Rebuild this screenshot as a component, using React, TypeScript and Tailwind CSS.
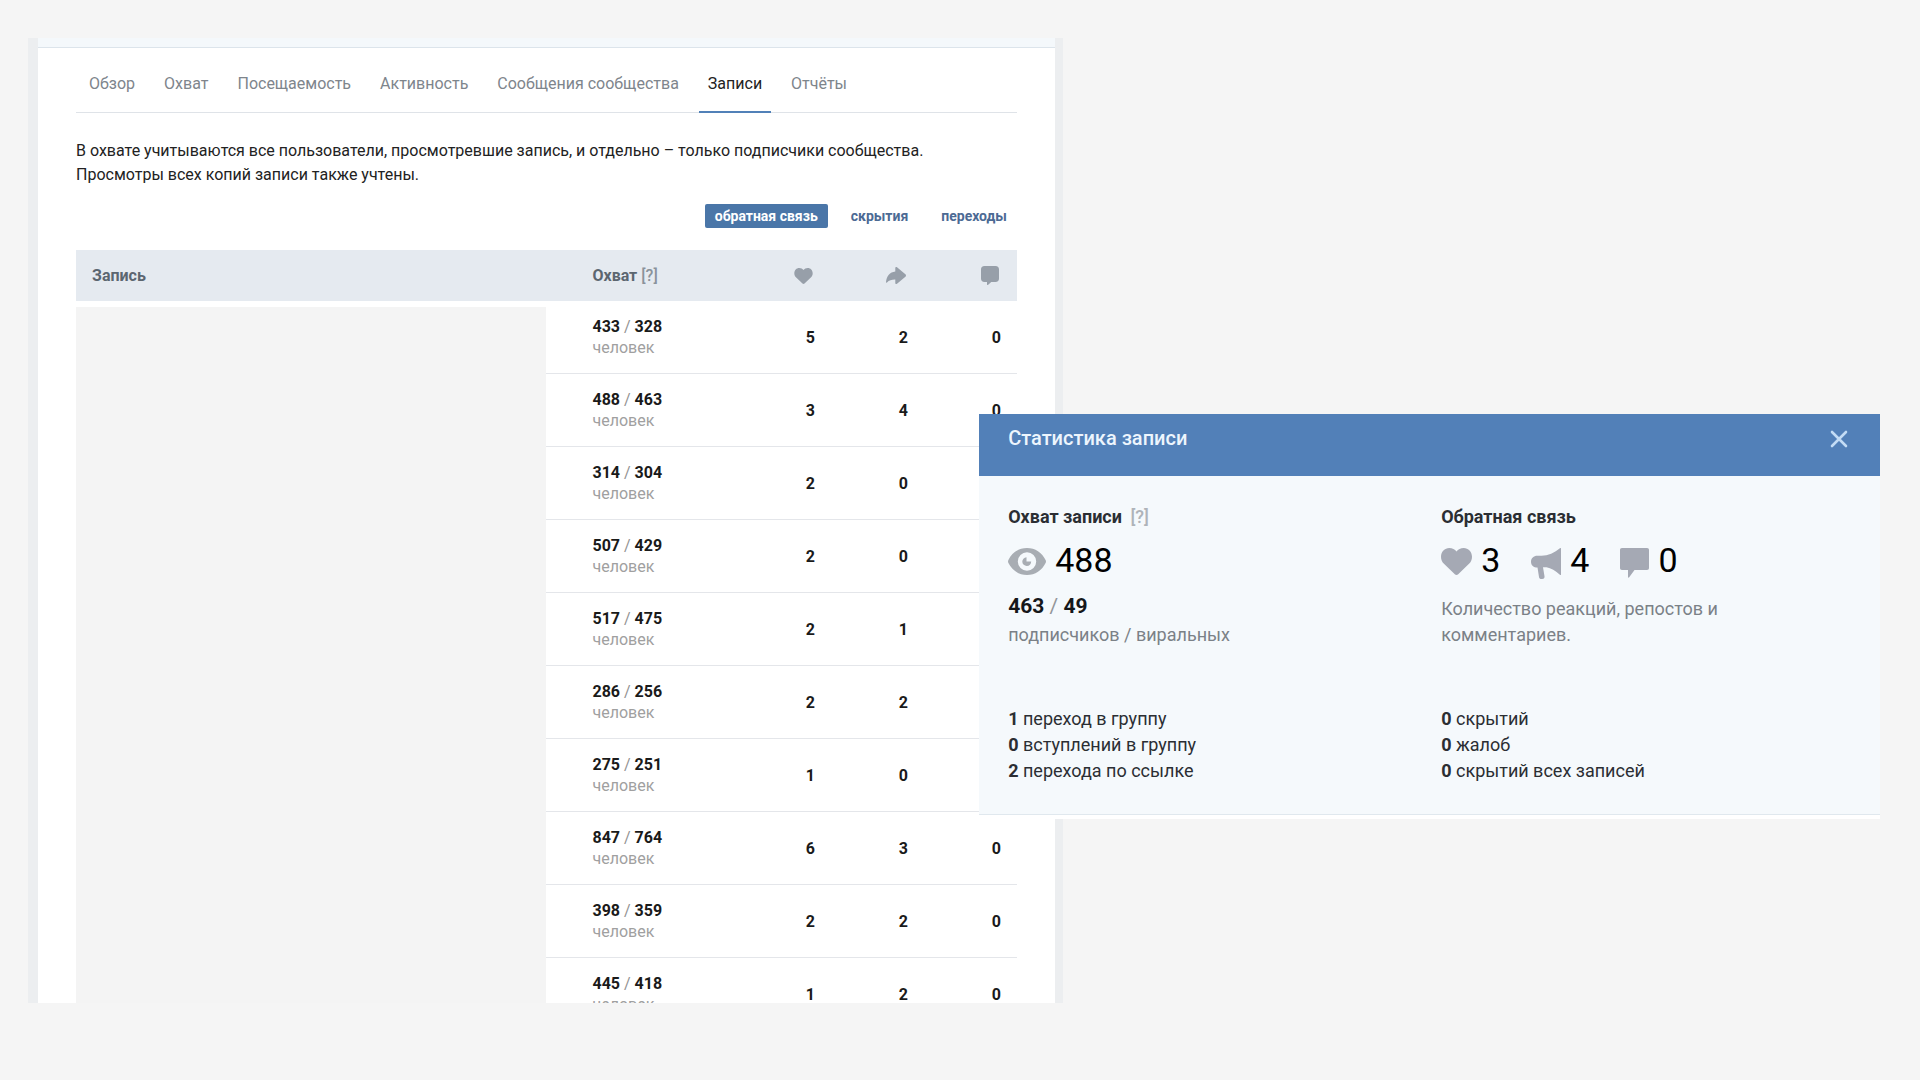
import { useState } from "react";

const tabs = [
  "Обзор",
  "Охват",
  "Посещаемость",
  "Активность",
  "Сообщения сообщества",
  "Записи",
  "Отчёты",
];

const filters = ["обратная связь", "скрытия", "переходы"];

const posts = [
  { total: 433, subs: 328, likes: 5, shares: 2, comments: 0 },
  { total: 488, subs: 463, likes: 3, shares: 4, comments: 0 },
  { total: 314, subs: 304, likes: 2, shares: 0, comments: 0 },
  { total: 507, subs: 429, likes: 2, shares: 0, comments: 0 },
  { total: 517, subs: 475, likes: 2, shares: 1, comments: 0 },
  { total: 286, subs: 256, likes: 2, shares: 2, comments: 0 },
  { total: 275, subs: 251, likes: 1, shares: 0, comments: 0 },
  { total: 847, subs: 764, likes: 6, shares: 3, comments: 0 },
  { total: 398, subs: 359, likes: 2, shares: 2, comments: 0 },
  { total: 445, subs: 418, likes: 1, shares: 2, comments: 0 },
];

const actions = [
  { count: 1, label: "переход в группу" },
  { count: 0, label: "вступлений в группу" },
  { count: 2, label: "перехода по ссылке" },
];

const negatives = [
  { count: 0, label: "скрытий" },
  { count: 0, label: "жалоб" },
  { count: 0, label: "скрытий всех записей" },
];

function Heart({ className }: { className: string }) {
  return (
    <svg viewBox="0 0 31 27" fill="currentColor" className={className} aria-hidden="true">
      <path d="M15.5 27c-.6 0-1.200-.3-1.700-.7L2.700 15.600C1 13.900 0 11.500 0 8.800 0 3.800 3.700 0 8.300 0c3 0 5.600 1.300 7.200 3.500C17.100 1.300 19.700 0 22.700 0 27.300 0 31 3.800 31 8.800c0 2.700-1 5.100-2.700 6.800L17.200 26.300c-.5.4-1.100.7-1.700.7z" />
    </svg>
  );
}

function Share({ className }: { className: string }) {
  return (
    <svg viewBox="0 0 20 17" fill="currentColor" className={className} aria-hidden="true">
      <path d="M9.300 1c0-1 .9-1.300 1.700-.7l8.400 7c.8.700.8 1.700 0 2.400l-8.400 7c-.8.600-1.700.2-1.700-.8v-3.300C5.800 12.500 3.200 13.400 1 15.400c-.6.500-1.100.2-1-.5C.6 9.100 3.800 5 9.300 4.400z" />
    </svg>
  );
}

function RoundComment({ className }: { className: string }) {
  return (
    <svg viewBox="0 0 18 19" fill="currentColor" className={className} aria-hidden="true">
      <path d="M3.500 0h11C16.800 0 18 1.200 18 3.500v9c0 2.300-1.200 3.500-3.500 3.500h-4.300l-3 2.800c-.6.500-1.200.2-1.200-.5V16H3.500C1.200 16 0 14.800 0 12.500v-9C0 1.200 1.200 0 3.500 0z" />
    </svg>
  );
}

function Comment({ className }: { className: string }) {
  return (
    <svg viewBox="0 0 29 30" fill="currentColor" className={className} aria-hidden="true">
      <path d="M2 0h25c1.300 0 2 .7 2 2v18c0 1.300-.7 2-2 2H14.500l-5.300 7.300c-.5.700-1.200.4-1.200-.4V22H2c-1.300 0-2-.7-2-2V2C0 .7.700 0 2 0z" />
    </svg>
  );
}

function Megaphone({ className }: { className: string }) {
  return (
    <svg viewBox="0 0 30 31" fill="currentColor" className={className} aria-hidden="true">
      <path d="M30 .6v25.800c0 .6-.6.8-1.100.4C24.500 22.700 20 20 15.500 19.300c-1.200-.2-2.500-.2-3.500 0l1.500 9c.2 1.600-.7 2.700-2.300 2.700h-.8c-1.300 0-2.200-.8-2.400-2.100l-1.500-9.300c-3.800 0-6.500-2.400-6.500-5.900S2.700 7.700 6.300 7.700h4.200C17 7.700 23.700 4.700 28.900.2c.5-.4 1.100-.2 1.100.4z" />
    </svg>
  );
}

function Eye({ className }: { className: string }) {
  return (
    <svg viewBox="0 0 38 27" fill="currentColor" className={className} aria-hidden="true">
      <path
        fillRule="evenodd"
        d="M19 0c8.200 0 15 4.700 18.600 12 .5 1 .5 2 0 3C34 22.300 27.200 27 19 27S4 22.300.4 15c-.5-1-.5-2 0-3C4 4.700 10.800 0 19 0zm0 4.300a9.200 9.200 0 1 0 0 18.400 9.200 9.200 0 0 0 0-18.400z"
      />
      <path d="M18.500 9.200v4.300h4.700c0 2.600-1.800 4.500-4.300 4.500a4.400 4.400 0 0 1-.4-8.800z" />
    </svg>
  );
}

function StatList({ items }: { items: { count: number; label: string }[] }) {
  return (
    <ul className="leading-[26px]">
      {items.map((item) => (
        <li key={item.label}>
          <b>{item.count}</b> {item.label}
        </li>
      ))}
    </ul>
  );
}

function PostStats({ onClose }: { onClose: () => void }) {
  return (
    <section
      role="dialog"
      aria-labelledby="post-stats-title"
      className="absolute top-[414px] right-10 left-[51%] border-b-4 border-white bg-[#f5f9fc] text-lg text-[#2b2e33]"
    >
      <header className="flex h-[62px] items-start justify-between bg-[#5280b8] pt-3 pr-7 pl-[29px]">
        <h2 id="post-stats-title" className="text-xl leading-6 font-medium text-[#edf5fd]">
          Статистика записи
        </h2>
        <button type="button" aria-label="Закрыть" onClick={onClose} className="p-1 text-[#c3dcf5]">
          <svg viewBox="0 0 18 18" className="size-[18px]" fill="none" stroke="currentColor" strokeWidth="2.600" strokeLinecap="round">
            <path d="M2 2l14 14M16 2L2 16" />
          </svg>
        </button>
      </header>
      <div className="grid grid-cols-[433px_1fr] border-b border-[#e0e8ee] px-[29px] pt-7 pb-[30px]">
        <div>
          <h3 className="leading-[26px] font-bold">
            Охват записи <a href="#reach" className="ml-1 font-medium text-[#aeb3b9]">[?]</a>
          </h3>
          <div className="mt-[6px] flex h-12 items-start gap-[9px] text-[34px] leading-[48px] text-black">
            <Eye className="mt-3 h-[27px] w-[38px] text-[#a8adb3]" />
            488
          </div>
          <p className="mt-2 text-[21px] leading-7 text-[#939699]">
            <b className="text-[#15171a]">463</b> / <b className="text-[#15171a]">49</b>
          </p>
          <p className="mt-0.5 leading-[26px] text-[#7b8187]">подписчиков / виральных</p>
        </div>
        <div>
          <h3 className="leading-[26px] font-bold">Обратная связь</h3>
          <div className="mt-[6px] flex h-12 items-start gap-[31px] text-[34px] leading-[48px] text-black">
            <span className="flex items-start gap-[9px]">
              <Heart className="mt-3 h-[27px] w-[31px] text-[#a5a9b4]" />3
            </span>
            <span className="flex items-start gap-[9px]">
              <Megaphone className="mt-3 h-[31px] w-[30px] text-[#a5a9b4]" />4
            </span>
            <span className="flex items-start gap-[9px]">
              <Comment className="mt-3 h-[30px] w-[29px] text-[#a5a9b4]" />0
            </span>
          </div>
          <p className="mt-3 max-w-[300px] leading-[26px] text-[#7b8187]">
            Количество реакций, репостов и комментариев.
          </p>
        </div>
        <div className="mt-[58px]">
          <StatList items={actions} />
        </div>
        <div className="mt-[58px]">
          <StatList items={negatives} />
        </div>
      </div>
    </section>
  );
}

export default function App() {
  const [tab, setTab] = useState("Записи");
  const [filter, setFilter] = useState(filters[0]);
  const [open, setOpen] = useState(true);

  return (
    <main className="relative h-screen overflow-hidden bg-[#f5f5f5] pt-[38px] pb-[77px] pl-7 font-[Roboto,sans-serif] text-base text-[#222]">
      <div className="h-full w-[54.7%] overflow-hidden border-r-8 border-l-10 border-[#eceef0]">
        <div className="h-full overflow-hidden bg-white">
          <div className="h-[10px] border-b border-[#dce4eb] bg-[#f4f8fb]" />
          <div className="px-[38px]">
            <nav className="flex h-[65px] gap-[11px] border-b border-[#dfe3e8] pl-1">
              {tabs.map((name) => (
                <button
                  key={name}
                  type="button"
                  onClick={() => setTab(name)}
                  className={
                    name === tab
                      ? "-mb-px border-b-2 border-[#5181b8] px-[9px] pt-3 pb-1 text-[#222]"
                      : "-mb-px border-b-2 border-transparent px-[9px] pt-3 pb-1 text-[#7e858c]"
                  }
                >
                  {name}
                </button>
              ))}
            </nav>
            <p className="mt-[26px] leading-6">
              В охвате учитываются все пользователи, просмотревшие запись, и отдельно – только подписчики сообщества.
              <br />
              Просмотры всех копий записи также учтены.
            </p>
            <div className="mt-[17px] flex justify-end gap-[13px]">
              {filters.map((name) => (
                <button
                  key={name}
                  type="button"
                  onClick={() => setFilter(name)}
                  className={
                    name === filter
                      ? "h-6 rounded-xs bg-[#4a76a8] px-[10px] text-sm font-bold text-white"
                      : "h-6 rounded-xs px-[10px] text-sm font-bold text-[#4c6a94]"
                  }
                >
                  {name}
                </button>
              ))}
            </div>
            <table className="mt-[22px] w-full table-fixed border-separate border-spacing-0 font-bold">
              <thead>
                <tr className="h-[51px] bg-[#e5eaf0] text-left text-[#5c6670]">
                  <th className="w-1/2 pl-4">Запись</th>
                  <th className="pl-[46px]">
                    Охват <a href="#reach" className="font-medium text-[#8a929b]">[?]</a>
                  </th>
                  <th className="w-[93px] pr-[18px]" aria-label="Лайки">
                    <Heart className="ml-auto h-4 w-[19px] text-[#979fa9]" />
                  </th>
                  <th className="w-[93px] pr-[18px]" aria-label="Репосты">
                    <Share className="ml-auto h-[17px] w-5 text-[#979fa9]" />
                  </th>
                  <th className="w-[93px] pr-[18px]" aria-label="Комментарии">
                    <RoundComment className="ml-auto h-[19px] w-[18px] text-[#979fa9]" />
                  </th>
                </tr>
              </thead>
              <tbody className="text-[#1a1a1a]">
                {posts.map((post, i) => (
                  <tr key={post.total} className="h-[73px]">
                    {i === 0 && (
                      <td rowSpan={posts.length} className="border-t-6 border-white bg-[#f4f4f4]" />
                    )}
                    <td className="border-b border-[#e4e6ea] pl-[46px] leading-[21px]">
                      {post.total} <span className="font-normal text-[#939393]">/</span> {post.subs}
                      <div className="font-normal text-[#a0a0a0]">человек</div>
                    </td>
                    <td className="border-b border-[#e4e6ea] pt-px pr-4 text-right">{post.likes}</td>
                    <td className="border-b border-[#e4e6ea] pt-px pr-4 text-right">{post.shares}</td>
                    <td className="border-b border-[#e4e6ea] pt-px pr-4 text-right">{post.comments}</td>
                  </tr>
                ))}
              </tbody>
            </table>
          </div>
        </div>
      </div>
      {open && <PostStats onClose={() => setOpen(false)} />}
    </main>
  );
}
